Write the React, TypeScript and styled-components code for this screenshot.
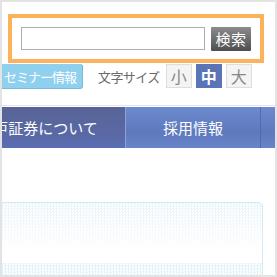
import * as React from 'react'
import styled, { createGlobalStyle } from 'styled-components'

const GlobalStyle = createGlobalStyle`
  html, body {
    margin: 0;
    padding: 0;
    background: #fff;
  }
  body {
    font-family: "Noto Sans CJK JP", "Noto Sans", sans-serif;
  }
`

const Frame = styled.div`
  box-sizing: border-box;
  width: 277px;
  height: 277px;
  border: 2px solid #e3e3e3;
  overflow: hidden;
  background: #fff;
`

const SearchBox = styled.form`
  box-sizing: border-box;
  display: flex;
  align-items: center;
  gap: 6px;
  width: 256px;
  height: 49px;
  margin: 12px 0 0 6px;
  padding: 0 8px 0 9px;
  border: 4px solid #fbb25b;
`

const SearchInput = styled.input`
  box-sizing: border-box;
  width: 184px;
  height: 23px;
  margin: 0;
  border: 1px solid #a8afb6;
  background: #fff;
  outline: none;
`

const SearchButton = styled.button`
  box-sizing: border-box;
  width: 40px;
  height: 24px;
  padding: 0;
  border: none;
  border-radius: 1px;
  background: linear-gradient(#8c8c8c, #4e4e4e);
  color: #fff;
  font-family: inherit;
  font-size: 15px;
  line-height: 24px;
  letter-spacing: 0.5px;
`

const ToolRow = styled.div`
  display: flex;
  align-items: center;
  height: 24px;
  margin-top: 1px;
`

const SeminarLink = styled.a`
  display: flex;
  align-items: center;
  height: 24px;
  margin-left: -8px;
  padding: 0 6px 0 10px;
  border-radius: 0 0 3px 0;
  background: #8fd0ee;
  box-shadow: 1px 1px 0 #7bbad8;
  color: #fff;
  font-size: 13px;
  letter-spacing: -1px;
  text-decoration: none;
  white-space: nowrap;
`

const SizeLabel = styled.span`
  margin: 0 6px 0 16px;
  color: #6a6a6a;
  font-size: 13px;
  letter-spacing: -0.6px;
  white-space: nowrap;
`

const SizeButtons = styled.div`
  display: flex;
  gap: 4px;
`

const SizeButton = styled.span<{ $active?: boolean }>`
  box-sizing: border-box;
  display: flex;
  align-items: center;
  justify-content: center;
  width: 26px;
  height: 24px;
  border: 1px solid ${(p) => (p.$active ? '#5a74b8' : '#dedede')};
  background: ${(p) => (p.$active ? '#5a74b8' : '#f4f4f4')};
  color: ${(p) => (p.$active ? '#fff' : '#888')};
  font-size: 16px;
  font-weight: ${(p) => (p.$active ? 700 : 400)};
`

const Rule = styled.div`
  height: 1px;
  margin-top: 17px;
  background: #e4e4e4;
`

const Nav = styled.nav`
  display: flex;
  height: 41px;
  margin: 1px 0 0 -51px;
`

const Tab = styled.a<{ $width: number; $current?: boolean }>`
  display: flex;
  align-items: center;
  justify-content: center;
  flex: 0 0 ${(p) => p.$width}px;
  background: ${(p) =>
    p.$current
      ? 'linear-gradient(#586496, #5a69a6 70%, #5a6eb4)'
      : 'linear-gradient(#6d8acf, #5f79bd 60%, #6884c9)'};
  border-right: 1px solid ${(p) => (p.$current ? '#8da2d9' : '#5567ad')};
  color: #fff;
  font-size: 15px;
  text-decoration: none;
  white-space: nowrap;
`

const Panel = styled.section`
  box-sizing: border-box;
  width: 281px;
  height: 120px;
  margin: 54px 0 0 -20px;
  border: 1px solid #d3eaf7;
  border-radius: 0 5px 0 0;
  background-color: #fff;
  background-image: linear-gradient(rgba(255, 255, 255, 0.15), #fff 85%),
    repeating-conic-gradient(#e4f2fa 0 25%, #fff 0 50%);
  background-size: 100% 60px, 3px 3px;
  background-repeat: no-repeat, repeat;
`

export default function App() {
  return (
    <>
      <GlobalStyle />
      <Frame>
        <SearchBox onSubmit={(e) => e.preventDefault()}>
          <SearchInput type="text" />
          <SearchButton type="submit">検索</SearchButton>
        </SearchBox>
        <ToolRow>
          <SeminarLink href="#">セミナー情報</SeminarLink>
          <SizeLabel>文字サイズ</SizeLabel>
          <SizeButtons>
            <SizeButton>小</SizeButton>
            <SizeButton $active>中</SizeButton>
            <SizeButton>大</SizeButton>
          </SizeButtons>
        </ToolRow>
        <Rule />
        <Nav>
          <Tab $width={174} $current>
            水戸証券について
          </Tab>
          <Tab $width={134}>採用情報</Tab>
          <Tab $width={134}>お問合せ</Tab>
        </Nav>
        <Panel />
      </Frame>
    </>
  )
}
